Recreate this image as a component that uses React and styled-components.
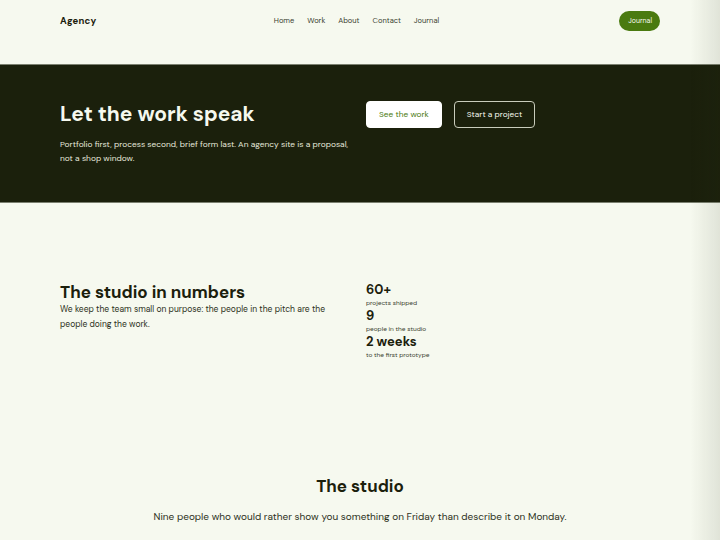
import React from "react";
import styled, { createGlobalStyle } from "styled-components";

const GlobalStyle = createGlobalStyle`
  * { box-sizing: border-box; }
  body {
    margin: 0;
    background: #f6f9ef;
    color: #1b200c;
    font-family: "DM Sans", Inter, "Noto Sans", sans-serif;
  }
`;

const Page = styled.div`
  min-height: 540px;
`;

const EdgeShade = styled.div`
  position: fixed;
  top: 0;
  right: 0;
  width: 30px;
  height: 100%;
  pointer-events: none;
  background: linear-gradient(to right, rgba(40, 45, 20, 0), rgba(40, 45, 20, 0.1));
`;

const Wrap = styled.div`
  width: 600px;
  margin: 0 auto;
`;

const Header = styled.header`
  height: 64px;
`;

const HeaderRow = styled(Wrap)`
  height: 100%;
  padding-bottom: 23px;
  display: flex;
  align-items: center;
  justify-content: space-between;
`;

const Brand = styled.div`
  font-size: 9.5px;
  font-weight: 700;
  letter-spacing: 0.2px;
  width: 120px;
`;

const Nav = styled.nav`
  display: flex;
  gap: 13px;
  margin-left: -7px;
`;

const NavLink = styled.a`
  font-size: 7.5px;
  color: #3a3f30;
  text-decoration: none;
`;

const Pill = styled.a`
  width: 120px;
  display: flex;
  justify-content: flex-end;
  text-decoration: none;
  span {
    background: #4a7a10;
    color: #f6f9ef;
    font-size: 7px;
    padding: 0 8px 0 9px;
    height: 20px;
    line-height: 20px;
    border-radius: 10px;
  }
`;

const Hero = styled.section`
  background: #1b200c;
  border-top: 1px solid #7b8070;
  border-bottom: 1px solid #7b8070;
  height: 139px;
`;

const Columns = styled(Wrap)`
  display: grid;
  grid-template-columns: 1fr 1fr;
  column-gap: 12px;
`;

const HeroGrid = styled(Columns)`
  padding-top: 35px;
`;

const HeroTitle = styled.h1`
  margin: 0;
  color: #f6f9ef;
  font-size: 21px;
  line-height: 28px;
  font-weight: 700;
`;

const HeroText = styled.p`
  margin: 10px 0 0;
  color: #e6e9dc;
  font-size: 8.4px;
  line-height: 14px;
`;

const Actions = styled.div`
  display: flex;
  gap: 12px;
  align-items: flex-start;
  padding-top: 1px;
`;

const Button = styled.a`
  height: 27px;
  padding: 0 12px;
  display: flex;
  align-items: center;
  border-radius: 4px;
  font-size: 8.3px;
  text-decoration: none;
  background: ${(p) => (p.$solid ? "#ffffff" : "transparent")};
  color: ${(p) => (p.$solid ? "#4a7a10" : "#f6f9ef")};
  border: 1px solid ${(p) => (p.$solid ? "#ffffff" : "#c9ccbc")};
`;

const Numbers = styled.section`
  padding: 79px 0 0;
  height: 260px;
`;

const SectionTitle = styled.h2`
  margin: 0;
  font-size: 17px;
  line-height: 20px;
  font-weight: 700;
  text-align: ${(p) => (p.$center ? "center" : "left")};
`;

const Body = styled.p`
  margin: 0;
  font-size: 8.5px;
  line-height: 15px;
  color: #2d3222;
`;

const Stat = styled.div`
  display: flex;
  flex-direction: column;
`;

const StatValue = styled.div`
  font-size: 13px;
  font-weight: 700;
  line-height: 16px;
`;

const StatLabel = styled.div`
  font-size: 6.5px;
  line-height: 10px;
  color: #3a3f30;
`;

const Studio = styled.section`
  text-align: center;
  padding-top: 13px;
`;

const Lead = styled.p`
  margin: 14px 0 0;
  font-size: 10px;
  line-height: 14px;
  color: #2d3222;
`;

const stats = [
  { value: "60+", label: "projects shipped" },
  { value: "9", label: "people in the studio" },
  { value: "2 weeks", label: "to the first prototype" },
];

export default function App() {
  return (
    <Page>
      <GlobalStyle />
      <Header>
        <HeaderRow>
          <Brand>Agency</Brand>
          <Nav>
            <NavLink>Home</NavLink>
            <NavLink>Work</NavLink>
            <NavLink>About</NavLink>
            <NavLink>Contact</NavLink>
            <NavLink>Journal</NavLink>
          </Nav>
          <Pill>
            <span>Journal</span>
          </Pill>
        </HeaderRow>
      </Header>
      <Hero>
        <HeroGrid>
          <div>
            <HeroTitle>Let the work speak</HeroTitle>
            <HeroText>
              Portfolio first, process second, brief form last. An agency site is a proposal,
              not a shop window.
            </HeroText>
          </div>
          <Actions>
            <Button $solid>See the work</Button>
            <Button>Start a project</Button>
          </Actions>
        </HeroGrid>
      </Hero>
      <Numbers>
        <Columns>
          <div>
            <SectionTitle>The studio in numbers</SectionTitle>
            <Body>
              We keep the team small on purpose: the people in the pitch are the people doing the
              work.
            </Body>
          </div>
          <div>
            {stats.map((s) => (
              <Stat key={s.label}>
                <StatValue>{s.value}</StatValue>
                <StatLabel>{s.label}</StatLabel>
              </Stat>
            ))}
          </div>
        </Columns>
      </Numbers>
      <Studio>
        <SectionTitle $center>The studio</SectionTitle>
        <Lead>Nine people who would rather show you something on Friday than describe it on Monday.</Lead>
      </Studio>
      <EdgeShade />
    </Page>
  );
}
